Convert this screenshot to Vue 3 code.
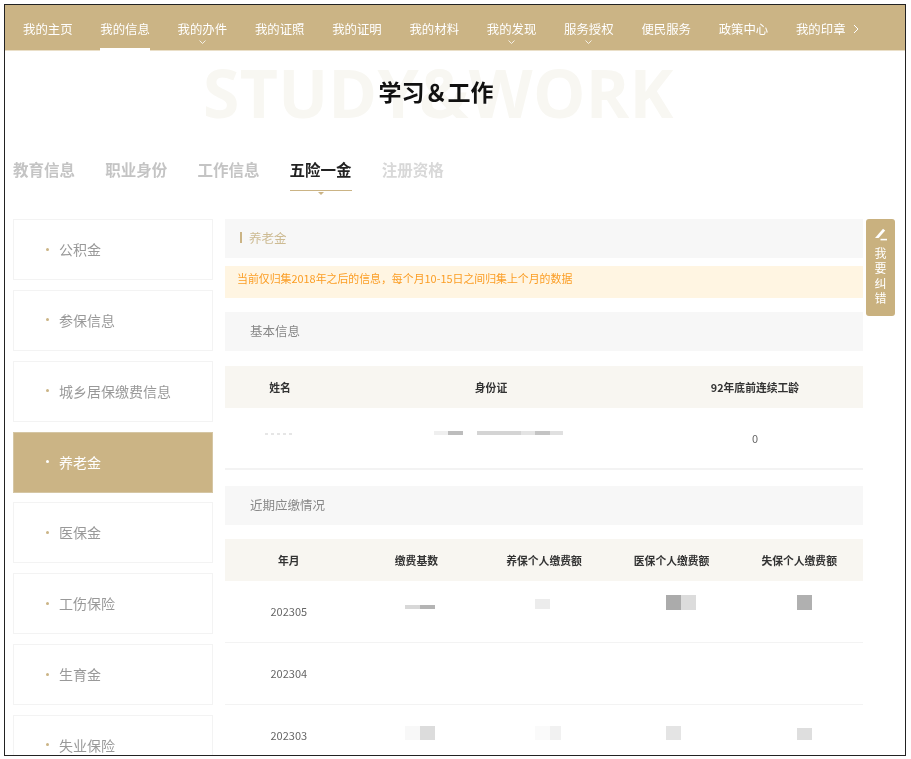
<template>
  <div class="frame">
    <div class="page">
      <nav class="nav">
        <a v-for="item in navItems" :key="item.name" class="nav-item" :class="{ active: item.active }">
          {{ item.name }}
          <svg v-if="item.drop" class="drop" width="7" height="4" viewBox="0 0 7 4"><path d="M.5.5 3.5 3.5 6.5.5" fill="none" stroke="#fff" stroke-width=".8"/></svg>
        </a>
        <svg class="next" width="6" height="10" viewBox="0 0 6 10"><path d="M1 1l4 4-4 4" fill="none" stroke="#fff" stroke-width="1"/></svg>
      </nav>

      <header class="title">
        <div class="title-bg">STUDY&amp;WORK</div>
        <h1>学习＆工作</h1>
      </header>

      <div class="tabs">
        <a v-for="tab in tabs" :key="tab" class="tab" :class="{ active: tab == '五险一金', pale: tab == '注册资格' }">{{ tab }}</a>
      </div>

      <div class="content">
        <aside class="side">
          <a v-for="item in sideItems" :key="item" class="side-item" :class="{ active: item == '养老金' }">
            <i class="dot"></i>{{ item }}
          </a>
        </aside>

        <main class="main">
          <div class="bar head"><i class="mark"></i>养老金</div>
          <div class="notice">当前仅归集2018年之后的信息，每个月10-15日之间归集上个月的数据</div>

          <div class="bar section">基本信息</div>
          <div class="grid basic th">
            <span>姓名</span><span>身份证</span><span>92年底前连续工龄</span>
          </div>
          <div class="grid basic row first">
            <span class="cell"><i class="name-mask"></i></span>
            <span class="cell id-mask">
              <i v-for="(m, i) in idMask" :key="i" :style="{ width: m[0] + 'px', background: m[1] }"></i>
            </span>
            <span class="zero">0</span>
          </div>

          <div class="bar section second">近期应缴情况</div>
          <div class="grid pay th">
            <span v-for="h in payHead" :key="h">{{ h }}</span>
          </div>
          <div v-for="r in payRows" :key="r.month" class="grid pay row">
            <span class="month">{{ r.month }}</span>
            <span v-for="(c, i) in r.cells" :key="i" class="cell blocks" :style="{ paddingLeft: blockLeft[i] + 'px' }">
              <i v-for="(m, j) in c" :key="j" :style="{ width: m[0] + 'px', height: m[1] + 'px', marginTop: m[2] + 'px', background: m[3] }"></i>
            </span>
          </div>
        </main>
      </div>

      <div class="fix-btn">
        <svg width="14" height="13" viewBox="0 0 14 13"><path d="M1 10 9 .8l2.2 1.7-6.6 7.5z" fill="#fff"/><path d="M6.5 11.6h6.5" stroke="#fff" stroke-width="1.6"/></svg>
        <span>我</span><span>要</span><span>纠</span><span>错</span>
      </div>
    </div>
  </div>
</template>

<script setup>
const navItems = [
  { name: '我的主页' },
  { name: '我的信息', active: true },
  { name: '我的办件', drop: true },
  { name: '我的证照' },
  { name: '我的证明' },
  { name: '我的材料' },
  { name: '我的发现', drop: true },
  { name: '服务授权', drop: true },
  { name: '便民服务' },
  { name: '政策中心' },
  { name: '我的印章' }
];

const tabs = ['教育信息', '职业身份', '工作信息', '五险一金', '注册资格'];

const sideItems = ['公积金', '参保信息', '城乡居保缴费信息', '养老金', '医保金', '工伤保险', '生育金', '失业保险'];

const payHead = ['年月', '缴费基数', '养保个人缴费额', '医保个人缴费额', '失保个人缴费额'];

const idMask = [
  [14, '#efefef'], [15, '#bdbdbd'], [14, 'transparent'], [44, '#d4d4d4'], [14, '#e4e4e4'], [15, '#c4c4c4'], [13, '#e0e0e0']
];

const blockLeft = [52, 55, 58, 62];

// redacted figures: width, height, top offset, colour
const payRows = [
  {
    month: '202305',
    cells: [
      [[15, 4, 24, '#d8d8d8'], [15, 4, 24, '#b4b4b4']],
      [[15, 10, 18, '#ececec']],
      [[15, 15, 14, '#ababab'], [15, 15, 14, '#dcdcdc']],
      [[15, 15, 14, '#b0b0b0']]
    ]
  },
  { month: '202304', cells: [[], [], [], []] },
  {
    month: '202303',
    cells: [
      [[15, 14, 21, '#f8f8f8'], [15, 14, 21, '#dcdcdc']],
      [[15, 14, 21, '#fafafa'], [11, 14, 21, '#f1f1f1']],
      [[15, 14, 21, '#e4e4e4']],
      [[15, 12, 23, '#dedede']]
    ]
  }
];
</script>

<style>
html, body {
  margin: 0;
  background: #fff;
}
</style>

<style scoped>
.frame {
  box-sizing: border-box;
  width: 902px;
  height: 752px;
  margin: 4px 0 0 4px;
  border: 1px solid #222;
  overflow: hidden;
  font-family: "Noto Sans CJK SC", "Liberation Sans", sans-serif;
}

/* the reference is a scaled-up capture, so everything is slightly soft */
.page {
  position: relative;
  height: 750px;
  filter: blur(0.55px);
}

.nav {
  display: flex;
  align-items: flex-start;
  gap: 27.3px;
  box-sizing: border-box;
  height: 46px;
  padding-left: 18px;
  background: #cbb485;
  border-bottom: 1px solid #eadfc8;
}

.nav-item {
  position: relative;
  width: 50px;
  height: 45px;
  padding-top: 14px;
  box-sizing: border-box;
  color: #fff;
  font-size: 12.4px;
  line-height: 20px;
  white-space: nowrap;
}

.nav-item.active::after {
  content: "";
  position: absolute;
  left: 0;
  right: 0;
  bottom: -1px;
  height: 3px;
  background: #fff;
}

.drop {
  position: absolute;
  left: 21px;
  top: 35px;
}

.next {
  margin: 19px 0 0 -20px;
}

.title {
  position: relative;
  height: 82px;
  padding-right: 38px;
  display: flex;
  align-items: center;
  justify-content: center;
}

.title-bg {
  position: absolute;
  left: 198px;
  top: 3px;
  color: #f8f7f2;
  font-size: 66px;
  line-height: 76px;
  font-weight: 700;
  font-family: "Open Sans", sans-serif;
  letter-spacing: 0.3px;
  white-space: nowrap;
}

.title h1 {
  position: relative;
  margin: -2px 0 0;
  color: #111;
  font-size: 23px;
  line-height: 30px;
  font-weight: 700;
}

.tabs {
  display: flex;
  gap: 30.2px;
  padding: 23px 0 0 8px;
}

.tab {
  position: relative;
  height: 34px;
  color: #c4c4c4;
  font-size: 15.5px;
  line-height: 26px;
  font-weight: 700;
}

.tab.pale {
  color: #d8d8d8;
}

.tab.active {
  color: #222;
  border-bottom: 1.5px solid #cbb485;
}

.tab.active::after {
  content: "";
  position: absolute;
  left: 50%;
  bottom: -4.5px;
  margin-left: -3px;
  border: 3px solid transparent;
  border-top-color: #cbb485;
  border-bottom: 0;
}

.content {
  display: flex;
  gap: 12px;
  padding: 28px 0 0 8px;
}

.side {
  width: 200px;
  flex: none;
}

.side-item {
  display: flex;
  align-items: center;
  box-sizing: border-box;
  height: 61px;
  margin-bottom: 9.85px;
  padding: 0 0 1px 32px;
  border: 1.5px solid #f3f3f3;
  color: #999;
  font-size: 14px;
}

.side-item.active {
  background: #cbb485;
  border-color: #d5c6a4;
  color: #fff;
}

.dot {
  width: 3px;
  height: 3px;
  margin-right: 10px;
  border-radius: 50%;
  background: #cbb485;
}

.side-item.active .dot {
  background: #fff;
}

.main {
  width: 638px;
  flex: none;
}

.bar {
  height: 39px;
  box-sizing: border-box;
  padding-bottom: 2px;
  display: flex;
  align-items: center;
  background: #f7f7f7;
  font-size: 12.5px;
}

.head {
  padding-left: 15px;
  color: #cdbb93;
}

.mark {
  width: 2px;
  height: 11px;
  margin-right: 7px;
  background: #cbb485;
}

.notice {
  height: 32px;
  margin: 8px 0 14px;
  padding-left: 12px;
  background: #fff5e2;
  color: #fb9d24;
  font-size: 10.9px;
  line-height: 25px;
}

.section {
  padding-left: 25px;
  color: #888;
}

.section.second {
  margin-top: 16px;
}

.grid {
  display: grid;
  text-align: center;
}

.basic {
  grid-template-columns: 110px 312px 216px;
}

.pay {
  grid-template-columns: repeat(5, 1fr);
}

.th {
  height: 42px;
  margin-top: 15px;
  align-items: center;
  background: #f8f6f1;
  color: #333;
  font-size: 10.8px;
  font-weight: 700;
}

.section.second + .th {
  margin-top: 14px;
}

.row {
  height: 62px;
  border-bottom: 1px solid #f3f3f3;
  box-sizing: border-box;
  color: #666;
  font-size: 11px;
}

.row.first {
  border-bottom-width: 2px;
}

.cell {
  display: flex;
  align-items: flex-start;
  justify-content: center;
}

.name-mask {
  width: 30px;
  height: 2px;
  margin-top: 25px;
  background: repeating-linear-gradient(90deg, #e6e6e6 0 3px, transparent 3px 6px);
}

.id-mask {
  padding-top: 23px;
  justify-content: flex-start;
  margin-left: 99px;
}

.id-mask i {
  height: 4px;
}

.zero {
  padding-top: 21px;
  line-height: 18px;
}

.month {
  line-height: 60px;
}

.blocks {
  justify-content: flex-start;
}

.fix-btn {
  position: absolute;
  left: 861px;
  top: 214px;
  width: 29px;
  height: 97px;
  box-sizing: border-box;
  padding-top: 9px;
  display: flex;
  flex-direction: column;
  align-items: center;
  background: #c9b17f;
  border-radius: 3px;
  color: #fff;
  font-size: 12px;
  line-height: 15px;
}

.fix-btn svg {
  margin-bottom: 4px;
}
</style>
